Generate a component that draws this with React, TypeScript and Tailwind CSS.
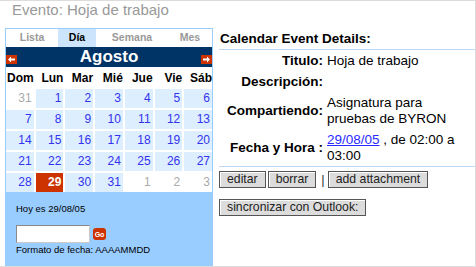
import React from 'react';

const weeks: number[][] = [
  [31, 1, 2, 3, 4, 5, 6],
  [7, 8, 9, 10, 11, 12, 13],
  [14, 15, 16, 17, 18, 19, 20],
  [21, 22, 23, 24, 25, 26, 27],
  [28, 29, 30, 31, 1, 2, 3],
];

const dayNames = ['Dom', 'Lun', 'Mar', 'Mié', 'Jue', 'Vie', 'Sáb'];

const Arrow = ({ dir }: { dir: 'left' | 'right' }): React.ReactElement => (
  <svg width="11" height="9" viewBox="0 0 11 9">
    <rect width="11" height="9" fill="#cc3300" />
    {dir === 'left' ? (
      <path d="M2 4.5 L5 1.5 V3.5 H9 V5.5 H5 V7.5 Z" fill="#fff" />
    ) : (
      <path d="M9 4.5 L6 1.5 V3.5 H2 V5.5 H6 V7.5 Z" fill="#fff" />
    )}
  </svg>
);

const Calendar = (): React.ReactElement => {
  return (
    <div className="ml-[5px] flex w-[208px] flex-col border border-b-0 border-[#99ccff]">
      <div className="flex h-[18px] items-center text-[10.5px] font-bold text-[#999]">
        <div className="flex h-full w-[52px] items-center justify-center bg-white">Lista</div>
        <div className="flex h-full w-[38px] items-center justify-center bg-[#cce4fc] text-black">Día</div>
        <div className="flex h-full w-[72px] items-center justify-center bg-white">Semana</div>
        <div className="flex h-full w-[44px] items-center justify-center bg-white">Mes</div>
      </div>
      <div className="grid h-[20px] grid-cols-[11px_1fr_11px] bg-[#003366]">
        <div className="mt-[8px]">
          <Arrow dir="left" />
        </div>
        <div className="text-center text-[17px] font-bold leading-[20px] text-white">Agosto</div>
        <div className="mt-[8px]">
          <Arrow dir="right" />
        </div>
      </div>
      <div className="grid h-[22px] grid-cols-7 items-center gap-x-[2px] bg-white text-[12px] font-bold text-black">
        {dayNames.map((d) => (
          <div key={d} className="text-right">
            {d}
          </div>
        ))}
      </div>
      <div className="grid grid-cols-7 gap-[2px] bg-white">
        {weeks.map((week, wi) =>
          week.map((day, di) => {
            const outside = (wi === 0 && day > 7) || (wi === 4 && day < 7);
            const today = wi === 4 && day === 29;
            let cls = 'bg-[#ddeeff] text-[#3333ee]';
            if (outside) cls = 'bg-white text-[#aaa]';
            if (today) cls = 'bg-[#cc3300] text-white font-bold';
            return (
              <div
                key={`${wi}-${di}`}
                className={`h-[19px] pr-[2px] text-right text-[12px] leading-[19px] ${cls}`}
              >
                {day}
              </div>
            );
          })
        )}
      </div>
      <div className="flex-1 bg-[#99ccff] pl-[10px] pt-[11px] text-[9.5px] leading-[12px] text-black">
        <div>Hoy es 29/08/05</div>
        <div className="mt-[10px] flex items-center gap-[3px]">
          <input
            className="h-[18px] w-[74px] border border-[#8a8a8a] border-r-[#ccc] border-b-[#ccc] bg-white"
            type="text"
            name="fecha"
            id="fecha"
          />
          <div className="flex h-[12px] w-[13px] items-center justify-center rounded-[3px] bg-[#cc3300] text-[7px] font-bold leading-none text-white">
            Go
          </div>
        </div>
        <div className="mt-[1px]">Formato de fecha: AAAAMMDD</div>
      </div>
    </div>
  );
};

const Details = (): React.ReactElement => {
  const btn =
    'border border-[#555] bg-[#dcdcdc] px-[7px] text-[12.25px] leading-[15px] text-[#222] shadow-[inset_1px_1px_0_#fff]';
  return (
    <div className="ml-[6px] flex flex-1 flex-col text-[13.5px]">
      <div className="h-[22px] border-b border-[#bcd8f2] pl-[1px] pt-[3px] font-bold leading-[16px]">
        Calendar Event Details:
      </div>
      <div className="grid grid-cols-[104px_130px] items-center gap-x-[4px] border-b border-[#bcd8f2] leading-[16px]">
        <div className="py-[2.5px] text-right font-bold">Titulo:</div>
        <div className="py-[2.5px]">Hoja de trabajo</div>
        <div className="py-[2.5px] text-right font-bold">Descripción:</div>
        <div className="py-[2.5px]">&nbsp;</div>
        <div className="py-[2.5px] text-right font-bold">Compartiendo:</div>
        <div className="py-[2.5px]">Asignatura para pruebas de BYRON</div>
        <div className="py-[2.5px] text-right font-bold">Fecha y Hora :</div>
        <div className="py-[2.5px]">
          <a className="text-[#2a2aff] underline">29/08/05</a> , de 02:00 a 03:00
        </div>
      </div>
      <div className="mt-[4px] flex items-center">
        <button className={btn}>editar</button>
        <button className={`ml-[2px] ${btn}`}>borrar</button>
        <span className="ml-[5px] mr-[3px] text-[13px] leading-[15px] text-[#333]">|</span>
        <button className={btn}>add attachment</button>
      </div>
      <div className="mt-[11px] flex">
        <button className={btn}>sincronizar con Outlook:</button>
      </div>
    </div>
  );
};

const App = (): React.ReactElement => {
  return (
    <div className="flex h-[267px] w-[476px] flex-col overflow-hidden border border-l-0 border-[#dcdcdc] bg-white font-['Liberation_Sans',Arial,sans-serif] text-black">
      <div className="h-[27px] shrink-0 pl-[12px] text-[15px] leading-[17px] text-[#999]">
        Evento: Hoja de trabajo
      </div>
      <div className="flex min-h-0 flex-1">
        <Calendar />
        <Details />
      </div>
    </div>
  );
};

export default App;
